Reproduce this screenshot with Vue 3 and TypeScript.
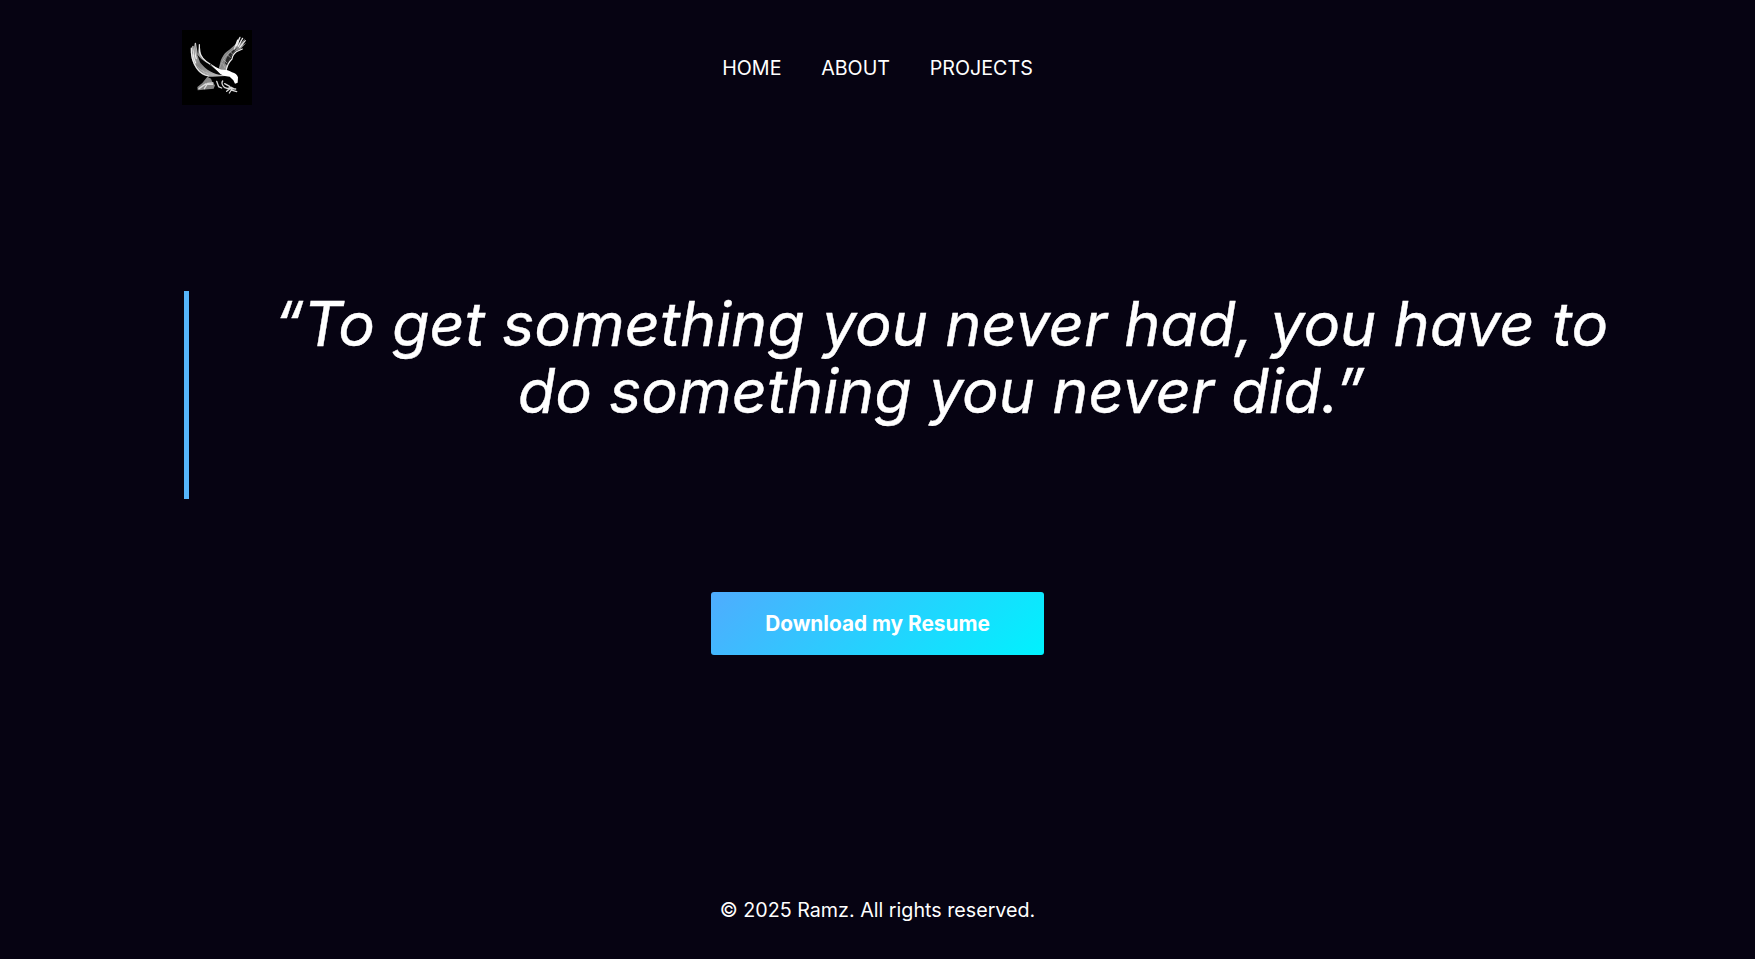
<script setup lang="ts">
const links: string[] = ['HOME', 'ABOUT', 'PROJECTS']
</script>

<template>
  <div class="page">
    <header class="header">
      <svg class="logo" viewBox="21 18 210 225" aria-label="Eagle logo">
        <defs>
          <linearGradient id="wing" x1="0" y1="0" x2="1" y2="1">
            <stop offset="0" stop-color="#ccc" />
            <stop offset=".45" stop-color="#808080" />
            <stop offset="1" stop-color="#ccc" />
          </linearGradient>
        </defs>
        <rect x="21" y="18" width="210" height="225" fill="#000" />
        <path d="M48 68C46 91 50 115 66 137C76 150 90 158 112 158L151 156L130 135L102 119C88 109 78 96 77 82L73 60L69 93L63 57L60 94L53 65L53 96Z" fill="url(#wing)" />
        <path d="M66 90C74 100 79 108 100 119L144 153C119 154 91 137 75 115Z" fill="#050505" />
        <path d="M132 134C136 108 142 90 163 77L183 59L193 39L191 59L202 39L195 60L211 43L202 63L214 56L196 76L178 83C168 99 158 110 155 138Z" fill="url(#wing)" />
        <path d="M150 118C154 97 167 80 186 72C174 87 164 101 158 127Z" fill="#2a2a2a" />
        <g fill="none" stroke="#eee" stroke-width="3.5" stroke-linecap="round">
          <path d="M49 72Q47 104 65 132Q78 151 101 156M54 67Q52 96 62 117M61 58Q57 86 64 104M73 62V82Q79 105 104 119" />
          <path d="M185 66L195 40M190 67L203 43M194 70L211 50M178 75L188 48M154 136Q159 116 171 105Q173 91 184 83L202 75" />
          <path d="M134 131Q144 98 177 74" stroke="#aaa" stroke-width="2.5" />
        </g>
        <g fill="none" stroke="#bbb" stroke-width="2">
          <path d="M66 127Q82 147 116 153M82 137L90 151M94 143L101 155M143 118L150 132M146 107L157 118M157 92L166 101M166 83L173 91" />
        </g>
        <path d="M104 117Q123 131 137 136Q157 136 171 145Q185 148 189 160L188 176L180 179L175 169L164 158Q148 158 137 151Q124 138 104 117Z" fill="#fff" />
        <path d="M97 158L108 164L112 174L120 184L116 194L68 199L67 189L82 177Z" fill="#858585" />
        <g fill="none" stroke="#d8d8d8" stroke-width="4" stroke-linecap="round">
          <path d="M72 194L92 180L113 181M88 194L98 178L114 177M125 172L131 188L140 192M143 171Q137 179 148 190L158 194M149 179L164 187M155 202L165 194L182 195M163 207L169 198L185 203M157 194L168 190L176 194" />
        </g>
      </svg>
      <nav class="nav"><a v-for="link in links" :key="link">{{ link }}</a></nav>
    </header>
    <main class="main">
      <blockquote class="quote"><p>“To get something you never had, you have to do something you never did.”</p></blockquote>
      <a class="resume">Download my Resume</a>
    </main>
    <footer class="footer">© 2025 Ramz. All rights reserved.</footer>
  </div>
</template>

<style>
body { background: #060312; }
</style>
<style scoped>
.page { box-sizing: border-box; height: 959px; padding: 30px 182px 0; display: flex; flex-direction: column; color: #fff; font-family: Inter, sans-serif; }
.header { display: grid; grid-template-columns: 1fr auto 1fr; align-items: center; height: 75px; }
.logo { display: block; width: 70px; height: 75px; }
.nav { display: flex; gap: 39.7px; font-size: 19.7px; }
.main { margin-top: 186px; }
.quote { box-sizing: border-box; width: 1427px; height: 208px; margin: 0 0 0 1.6px; border-left: 5px solid #55b5fb; padding-left: 83px; }
.quote p { margin: 0; font-size: 61.2px; line-height: 67px; font-style: italic; text-align: center; -webkit-text-stroke: 0.4px #fff; }
.resume { display: flex; align-items: center; justify-content: center; width: 333px; height: 63px; margin: 92.5px auto 0; border-radius: 3px; background: linear-gradient(135deg, #4facfe, #00f2fe); font-size: 20.8px; font-weight: 700; }
.footer { margin-top: 243.5px; text-align: center; font-size: 19.7px; line-height: 24px; }
</style>
